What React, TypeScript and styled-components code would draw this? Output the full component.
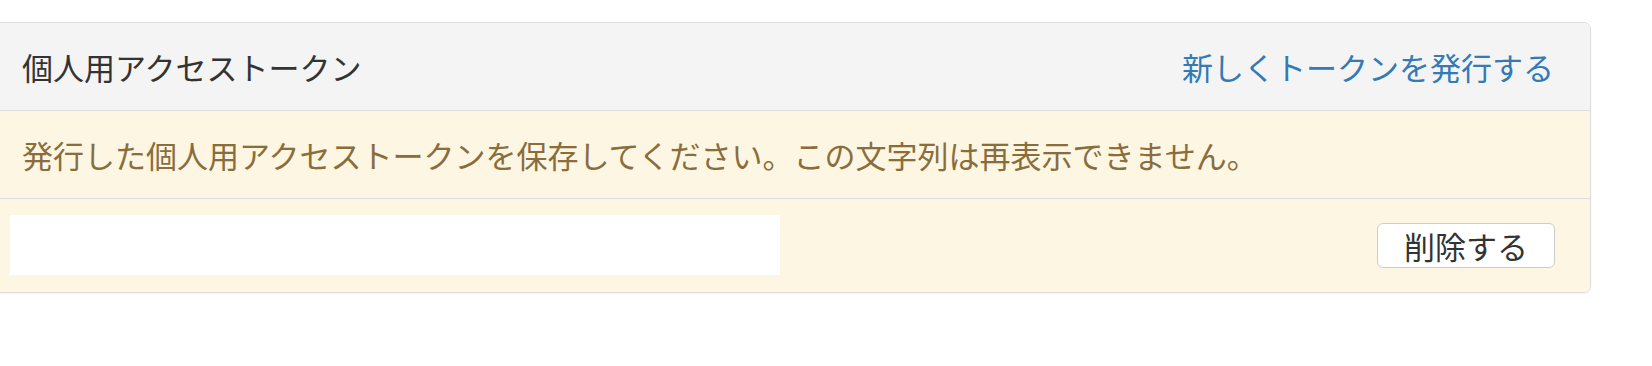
import React from 'react';
import styled, { createGlobalStyle } from 'styled-components';

const GlobalStyle = createGlobalStyle`
  html, body {
    margin: 0;
    padding: 0;
    background: #fff;
    overflow: hidden;
  }
  body {
    font-family: "Noto Sans CJK JP", "Noto Sans", sans-serif;
    color: #333;
  }
`;

const Page = styled.div`
  padding-top: 22px;
  width: 1652px;
  height: 366px;
  box-sizing: border-box;
`;

const Panel = styled.section`
  margin-left: -10px;
  width: 1601px;
  box-sizing: border-box;
  border: 1px solid #ddd;
  border-radius: 7px;
  overflow: hidden;
  box-shadow: 0 1px 2px rgba(0, 0, 0, 0.05);
`;

const Heading = styled.header`
  display: flex;
  align-items: center;
  justify-content: space-between;
  height: 87px;
  padding: 0 36px 0 31px;
  background: #f4f4f4;
  border-bottom: 1px solid #ddd;
`;

const Title = styled.h3`
  margin: 0;
  font-size: 31px;
  font-weight: 400;
  line-height: 1;
  color: #333;
`;

const IssueLink = styled.a`
  font-size: 31px;
  line-height: 1;
  color: #337ab7;
  text-decoration: none;
  cursor: pointer;
`;

const Notice = styled.div`
  display: flex;
  align-items: center;
  height: 87px;
  padding-left: 31px;
  background: #fcf6e3;
  border-bottom: 1px solid #ddd;
  color: #8a6d3b;
  font-size: 31px;
  line-height: 1;
`;

const TokenRow = styled.div`
  display: flex;
  align-items: center;
  justify-content: space-between;
  height: 93px;
  padding: 0 35px 0 19px;
  background: #fcf6e3;
`;

const TokenBox = styled.div`
  width: 770px;
  height: 60px;
  margin-top: -2px;
  background: #fff;
`;

const DeleteButton = styled.button`
  width: 178px;
  height: 45px;
  padding: 0;
  background: #fff;
  border: 1px solid #ccc;
  border-radius: 6px;
  font-family: inherit;
  font-size: 31px;
  line-height: 1;
  color: #333;
  cursor: pointer;
`;

export default function App() {
  return (
    <Page>
      <GlobalStyle />
      <Panel>
        <Heading>
          <Title>個人用アクセストークン</Title>
          <IssueLink>新しくトークンを発行する</IssueLink>
        </Heading>
        <Notice>
          発行した個人用アクセストークンを保存してください。この文字列は再表示できません。
        </Notice>
        <TokenRow>
          <TokenBox />
          <DeleteButton>削除する</DeleteButton>
        </TokenRow>
      </Panel>
    </Page>
  );
}
